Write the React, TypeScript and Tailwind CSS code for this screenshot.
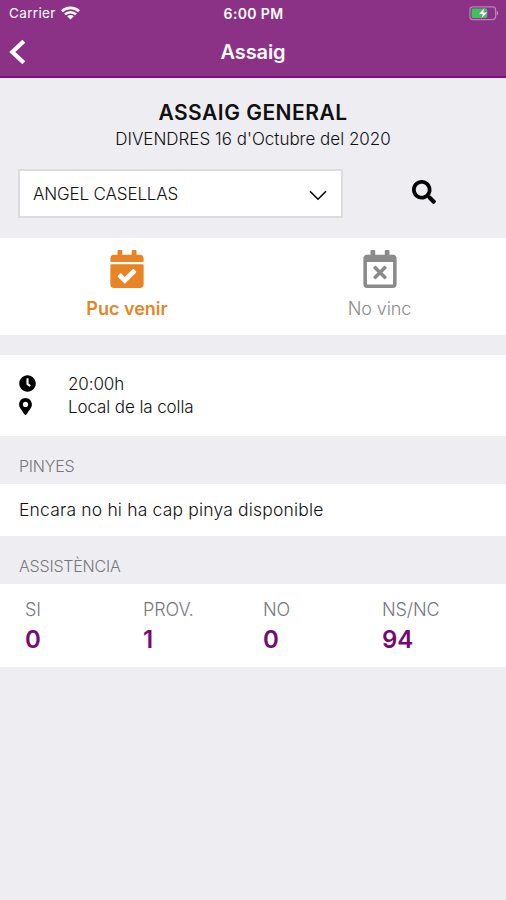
import React from "react";
import {
  FaCalendarCheck,
  FaClock,
  FaMapMarkerAlt,
  FaRegCalendarTimes,
  FaSearch,
} from "react-icons/fa";

interface StatType {
  label: string;
  value: number;
}

const stats: StatType[] = [
  { label: "SI", value: 0 },
  { label: "PROV.", value: 1 },
  { label: "NO", value: 0 },
  { label: "NS/NC", value: 94 },
];

const WifiIcon: React.FC = () => (
  <svg className="w-[19px] h-[14px] -mt-0.5" viewBox="0 0 19 14" fill="none" stroke="white" strokeWidth="2.6">
    <path d="M1 5.2C5.7 0.7 13.3 0.7 18 5.2" />
    <path d="M4 8.4C7 5.5 12 5.5 15 8.4" />
    <path d="M9.5 13.6L6.2 10.3C8 8.6 11 8.6 12.8 10.3Z" fill="white" stroke="none" />
  </svg>
);

const BatteryIcon: React.FC = () => (
  <svg className="w-[30px] h-[15px]" viewBox="0 0 30 15" fill="none">
    <rect x="0.9" y="0.9" width="25.7" height="12.7" rx="3" stroke="#b983b5" strokeWidth="1.2" />
    <path d="M27.6 4.6v5.2c2.2-.8 2.2-4.4 0-5.2z" fill="#b983b5" />
    <rect x="2.6" y="2.6" width="15.6" height="9.3" rx="1.4" fill="#35c759" />
    <path d="M15.8 1.6L9.4 8.2h4l-1.4 4.9L18.8 6.2h-4.2z" fill="white" stroke="#8c3286" strokeWidth="0.4" />
  </svg>
);

const Header: React.FC = () => (
  <header className="h-[78px] bg-[#8c3286] border-b-2 border-[#800a80] text-white">
    <div className="grid grid-cols-3 items-center h-[26px] pl-[9px] pr-[7px] text-[13.5px]">
      <div className="flex items-center gap-[5px] pt-px tracking-[0.35px]">
        Carrier
        <WifiIcon />
      </div>
      <div className="pr-px text-center text-[14px] font-semibold tracking-[0.35px]">6:00 PM</div>
      <div className="flex justify-end">
        <BatteryIcon />
      </div>
    </div>
    <div className="grid grid-cols-3 items-center h-[51px] px-[9px]">
      <svg className="w-[18px] h-[26px]" viewBox="0 0 18 26" fill="none" stroke="white" strokeWidth="4.2">
        <path d="M14.8 2.2L3.3 13l11.5 10.8" />
      </svg>
      <h1 className="text-center text-[20px] font-semibold tracking-[-0.1px]">Assaig</h1>
    </div>
  </header>
);

const SectionTitle: React.FC<{ title: string }> = ({ title }) => (
  <h3 className="h-12 pt-[18px] pl-[19px] text-[16px] leading-[24px] font-light tracking-[-0.2px] text-[#77777b]">
    {title}
  </h3>
);

const App: React.FC = () => {
  return (
    <div className="min-h-screen bg-[#eeedf2] text-[#111111] font-['Inter',sans-serif]">
      <Header />

      <div className="h-[160px] pt-[22px]">
        <h2 className="text-center text-[21px] leading-[26px] font-semibold tracking-[0.5px]">ASSAIG GENERAL</h2>
        <p className="text-center text-[17px] leading-[26px] font-light">
          DIVENDRES 16 d&apos;Octubre del 2020
        </p>
        <div className="flex items-start mt-[17px] pl-[18px]">
          <div className="flex items-center justify-between w-[325px] h-[49px] pl-[13px] pr-[14px] bg-white border-2 border-[#dcdce0]">
            <span className="pt-[3px] text-[17px] font-light tracking-[-0.15px]">ANGEL CASELLAS</span>
            <svg className="w-[18px] h-[11px] mt-[3px]" viewBox="0 0 18 11" fill="none" stroke="black" strokeWidth="1.5">
              <path d="M1 1.2l8 8 8-8" />
            </svg>
          </div>
          <FaSearch className="mt-[11px] ml-[69px] text-[24px] text-black" />
        </div>
      </div>

      <div className="grid grid-cols-2 h-[97px] bg-white">
        <button className="flex flex-col items-center pt-[12px] pl-px text-[#e88424]">
          <FaCalendarCheck className="text-[38px]" />
          <span className="mt-[9px] text-[18px] leading-[24px] font-semibold">Puc venir</span>
        </button>
        <button className="flex flex-col items-center pt-[12px] text-[#8b8b8b]">
          <FaRegCalendarTimes className="text-[38px]" />
          <span className="mt-[9px] text-[18px] leading-[24px] font-light tracking-[-0.1px]">No vinc</span>
        </button>
      </div>

      <div className="h-[81px] mt-5 pt-[17px] pl-[19px] bg-white text-[17px] leading-[23px] font-light tracking-[-0.1px]">
        <div className="flex items-center">
          <FaClock className="mr-8 -mt-0.5 text-[17px] text-black" />
          <span className="pt-px">20:00h</span>
        </div>
        <div className="flex items-center">
          <FaMapMarkerAlt className="-ml-[2px] mr-[34px] -mt-[3px] text-[17px] text-black" />
          <span>Local de la colla</span>
        </div>
      </div>

      <SectionTitle title="PINYES" />
      <div className="flex items-center h-[52px] pt-px pl-[19px] bg-white text-[17.5px] font-light tracking-[0.17px]">
        Encara no hi ha cap pinya disponible
      </div>

      <SectionTitle title="ASSISTÈNCIA" />
      <div className="grid grid-cols-[118px_120px_119px_1fr] h-[83px] pt-[13px] pl-[25px] bg-white">
        {stats.map((stat) => (
          <div key={stat.label}>
            <div className="text-[18px] leading-[26px] font-light tracking-[-0.1px] text-[#77777b]">{stat.label}</div>
            <div className="text-[24px] leading-[34px] font-semibold text-[#750a75]">{stat.value}</div>
          </div>
        ))}
      </div>
    </div>
  );
};

export default App;
